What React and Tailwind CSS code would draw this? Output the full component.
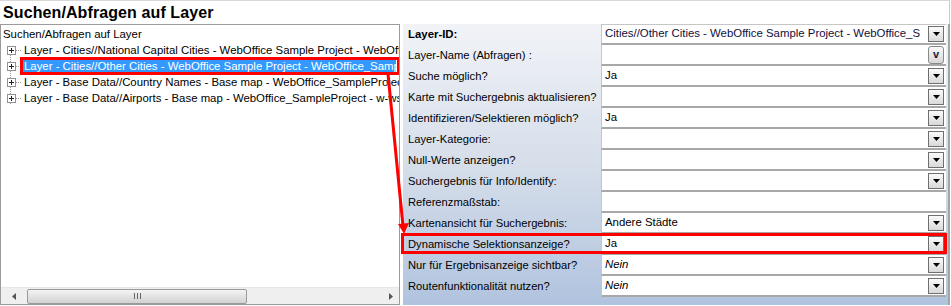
import React from 'react';

const rows = [
  { label: 'Layer-ID:', value: 'Cities//Other Cities - WebOffice Sample Project - WebOffice_S', bold: true, btn: 'arrow' },
  { label: 'Layer-Name (Abfragen) :', value: '', btn: 'v' },
  { label: 'Suche möglich?', value: 'Ja', btn: 'arrow' },
  { label: 'Karte mit Suchergebnis aktualisieren?', value: '', btn: 'arrow' },
  { label: 'Identifizieren/Selektieren möglich?', value: 'Ja', btn: 'arrow' },
  { label: 'Layer-Kategorie:', value: '', btn: 'arrow' },
  { label: 'Null-Werte anzeigen?', value: '', btn: 'arrow' },
  { label: 'Suchergebnis für Info/Identify:', value: '', btn: 'arrow' },
  { label: 'Referenzmaßstab:', value: '', btn: null },
  { label: 'Kartenansicht für Suchergebnis:', value: 'Andere Städte', btn: 'arrow' },
  { label: 'Dynamische Selektionsanzeige?', value: 'Ja', btn: 'arrow', marked: true },
  { label: 'Nur für Ergebnisanzeige sichtbar?', value: 'Nein', italic: true, btn: 'arrow' },
  { label: 'Routenfunktionalität nutzen?', value: 'Nein', italic: true, btn: 'arrow' },
];

const treeItems = [
  'Layer - Cities//National Capital Cities - WebOffice Sample Project - WebOffice_SampleProject',
  'Layer - Cities//Other Cities - WebOffice Sample Project - WebOffice_SampleProject',
  'Layer - Base Data//Country Names - Base map - WebOffice_SampleProject - w-ws',
  'Layer - Base Data//Airports - Base map - WebOffice_SampleProject - w-ws-project',
];

const DropButton = ({ kind }) => {
  if (kind === 'v') {
    return (
      <div className="w-[16px] h-[18px] mr-[2px] shrink-0 rounded-[3px] border border-[#8a8a8a] bg-gradient-to-b from-[#fafafa] to-[#d6d6d6] flex items-center justify-center text-[11px] font-bold leading-none text-[#1a1a3a]">
        v
      </div>
    );
  }
  return (
    <div className="w-[16px] h-[16px] mr-[2px] shrink-0 border border-[#6f6f6f] bg-gradient-to-b from-[#fbfbfb] to-[#d9d9d9] flex items-center justify-center">
      <svg width="7" height="4" viewBox="0 0 7 4">
        <path d="M0 0h7L3.5 4z" fill="#000" />
      </svg>
    </div>
  );
};

const PlusBox = () => (
  <div className="relative z-10 w-[9px] h-[9px] shrink-0 border border-[#919191] bg-white flex items-center justify-center">
    <svg width="5" height="5" viewBox="0 0 5 5">
      <path d="M0 2.5h5M2.5 0v5" stroke="#222" strokeWidth="1" />
    </svg>
  </div>
);

export default function App() {
  return (
    <div className="relative w-[951px] h-[306px] bg-white overflow-hidden text-[11.4px] text-black" style={{ fontFamily: '"Liberation Sans", Arial, sans-serif' }}>
      {/* title strip */}
      <div className="h-[24px] border-t border-[#d8d8d8] border-r border-r-[#c8c8c8] mr-[1px] pl-[3px] flex items-center">
        <span className="text-[16px] font-bold leading-none tracking-[0.1px]">Suchen/Abfragen auf Layer</span>
      </div>

      <div className="flex h-[281px]">
        {/* left tree panel */}
        <div className="w-[400px] shrink-0 border border-[#9c9c9c] flex flex-col bg-white">
          <div className="relative flex-1 overflow-hidden pl-[2px] pt-[1px] whitespace-nowrap">
            <div className="h-[16px] leading-[16px]">Suchen/Abfragen auf Layer</div>
            {/* dotted tree connector */}
            <div className="absolute left-[9px] top-[22px] h-[57px] border-l border-dotted border-[#9a9a9a]" />
            {treeItems.map((t, i) => (
              <div key={i} className="h-[16px] flex items-center relative">
                <div className="w-[4px] shrink-0" />
                <PlusBox />
                <div className="w-[5px] shrink-0 border-t border-dotted border-[#9a9a9a]" />
                <div className={`ml-[2px] px-[1px] leading-[14px] shrink-0 ${i === 1 ? 'bg-[#3399ff] text-white w-[373px] overflow-hidden' : ''}`}>{t}</div>
                {i === 1 && (
                  <div className="absolute left-[17px] top-[-1px] w-[380px] h-[18px] border-[3px] border-[#ff0000]" />
                )}
              </div>
            ))}
          </div>
          {/* horizontal scrollbar */}
          <div className="h-[17px] bg-[#efefef] flex items-center border-t border-[#e6e6e6]">
            <div className="w-[26px] flex justify-center">
              <svg width="4" height="7" viewBox="0 0 4 7"><path d="M4 0v7L0 3.5z" fill="#555" /></svg>
            </div>
            <div className="w-[220px] h-[15px] rounded-[2px] border border-[#9a9a9a] bg-gradient-to-b from-[#f4f4f4] to-[#d2d2d2] flex items-center justify-center">
              <svg width="7" height="6" viewBox="0 0 7 6"><path d="M0.5 0v6M3.5 0v6M6.5 0v6" stroke="#666" /></svg>
            </div>
            <div className="flex-1" />
            <div className="w-[16px] flex justify-center">
              <svg width="4" height="7" viewBox="0 0 4 7"><path d="M0 0v7L4 3.5z" fill="#555" /></svg>
            </div>
          </div>
        </div>

        <div className="w-[3px] shrink-0 bg-white" />

        {/* right property panel */}
        <div className="flex-1 mr-[1px] border-r-2 border-[#a4a4a4] bg-gradient-to-b from-[#f1f3f7] via-[#d6deea] to-[#b0c3de]">
          {rows.map((r, i) => (
            <div key={i} className="relative h-[21px] flex">
              <div className={`w-[198px] shrink-0 pl-[5px] flex items-center whitespace-nowrap overflow-hidden ${r.bold ? 'font-bold' : 'text-[11.2px]'}`}>{r.label}</div>
              <div className={`flex-1 min-w-0 mr-[2px] bg-white border-l border-[#c6c6c6] border-b-2 border-b-[#a8a8a8] flex items-center ${i === 0 ? 'border-t border-t-[#c6c6c6]' : ''}`}>
                <div className={`flex-1 min-w-0 pl-[3px] whitespace-nowrap overflow-hidden ${r.italic ? 'italic' : ''} ${i === 0 ? 'text-[#101040]' : ''}`}>{r.value}</div>
                {r.btn && <DropButton kind={r.btn} />}
              </div>
              {r.marked && (
                <div className="absolute left-[-2px] right-[1px] top-[-1px] h-[21px] border-[3px] border-[#ff0000]" />
              )}
            </div>
          ))}
        </div>
      </div>

      {/* red pointer arrow */}
      <svg className="absolute left-0 top-0 pointer-events-none" width="951" height="306">
        <path d="M388 74 L403 226" stroke="#ff0000" strokeWidth="3" fill="none" />
        <path d="M398 224 L409 223 L404 234 Z" fill="#ff0000" />
      </svg>
    </div>
  );
}
